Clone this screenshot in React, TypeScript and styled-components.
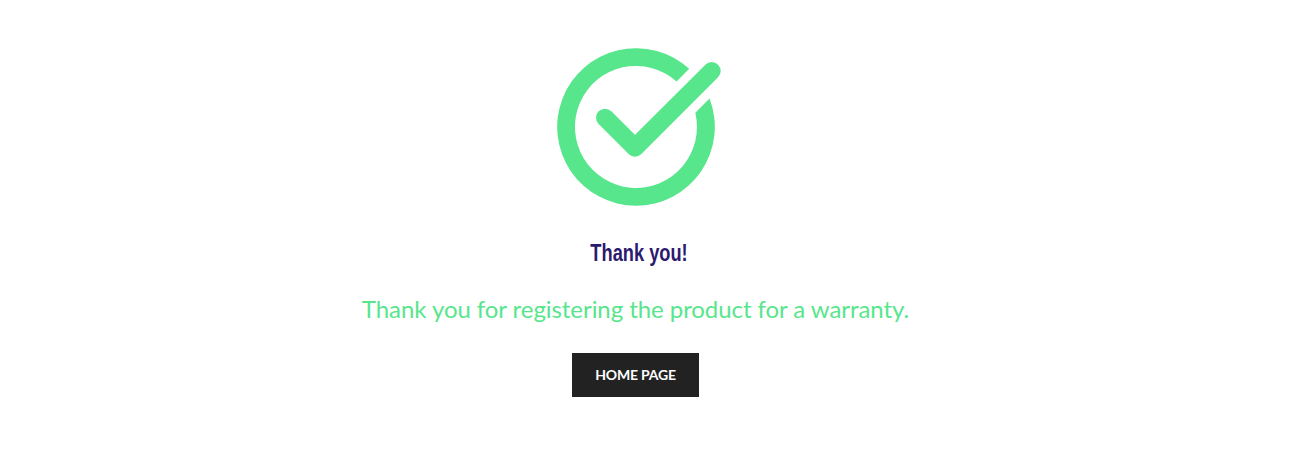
import styled, { createGlobalStyle } from "styled-components";

const GlobalStyle = createGlobalStyle`
  html, body {
    margin: 0;
    padding: 0;
    background: #fff;
    font-family: "Lato", "Liberation Sans", sans-serif;
  }
`;

const Page = styled.main`
  display: flex;
  flex-direction: column;
  align-items: center;
  width: 1271px;
  height: 469px;
  padding-top: 48px;
  box-sizing: border-box;
`;

const Icon = styled.svg`
  display: block;
  width: 164px;
  height: 158px;
  margin-left: 7px;
  overflow: visible;
`;

const Title = styled.h2`
  margin: 33px 0 0 8px;
  font-family: "Liberation Sans", sans-serif;
  font-size: 24px;
  line-height: 28px;
  font-weight: 700;
  color: #2c1a6e;
  transform: scaleX(0.76);
`;

const Message = styled.p`
  margin: 27px 0 0;
  font-size: 24px;
  line-height: 29px;
  font-weight: 400;
  letter-spacing: -0.06px;
  color: #57e68c;
`;

const HomeButton = styled.a`
  display: flex;
  align-items: center;
  justify-content: center;
  width: 127px;
  height: 44px;
  margin-top: 30px;
  padding-bottom: 1px;
  box-sizing: border-box;
  background: #222;
  color: #fff;
  font-size: 14px;
  font-weight: 700;
  letter-spacing: -0.2px;
  text-transform: uppercase;
  text-decoration: none;
`;

const App = () => {
  return (
    <>
      <GlobalStyle />
      <Page>
        <Icon viewBox="557 48 164 158" aria-hidden="true">
          <path
            fill="#57e68c"
            d="M689.2 68.8A78.8 78.8 0 1 0 709.5 98.5L695.3 112.7A61 61 0 1 1 676.6 81.4Z"
          />
          <path
            fill="none"
            stroke="#57e68c"
            strokeWidth="18"
            strokeLinecap="round"
            strokeLinejoin="round"
            d="M605 117.7L635 147.7L711.7 71"
          />
        </Icon>
        <Title>Thank you!</Title>
        <Message>Thank you for registering the product for a warranty.</Message>
        <HomeButton href="#">Home page</HomeButton>
      </Page>
    </>
  );
};

export default App;
